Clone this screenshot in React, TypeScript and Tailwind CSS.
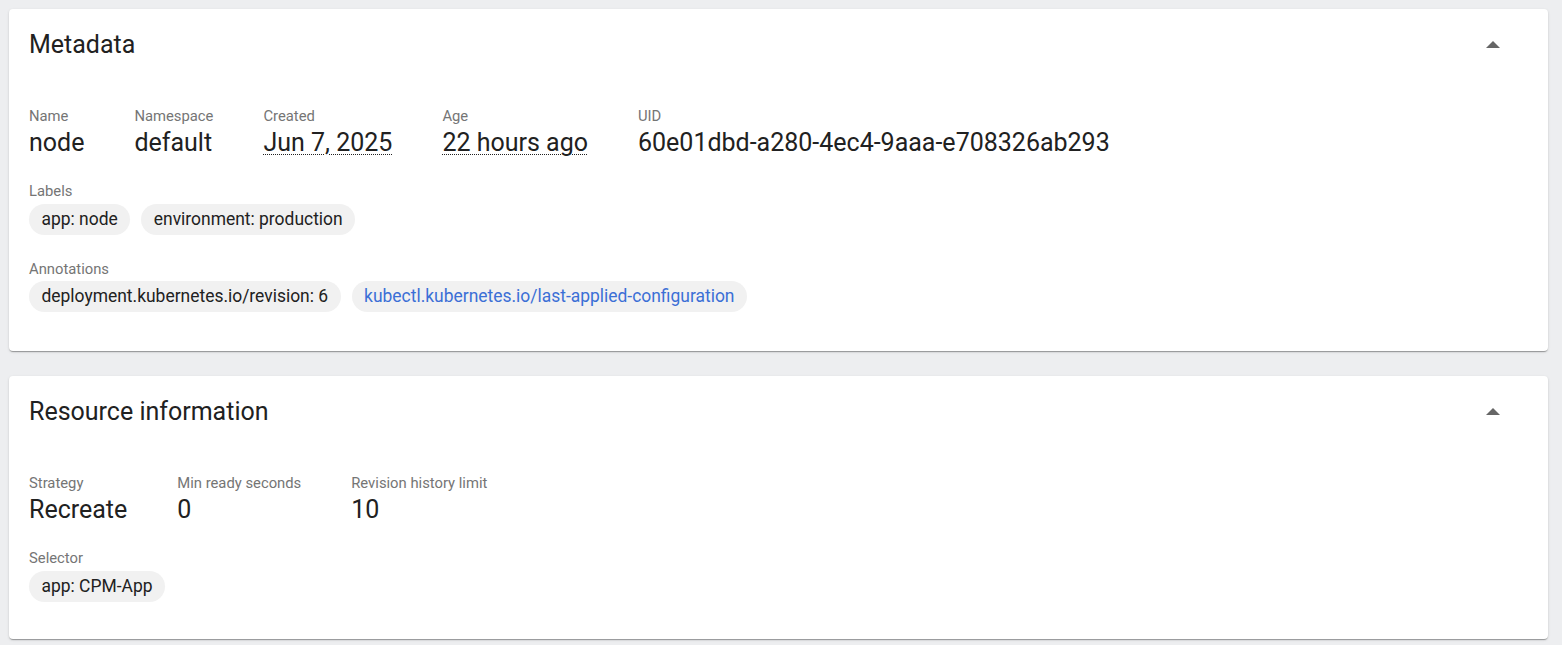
import React from 'react';

type Field = { label: string; value: string; dotted?: boolean };
type Chip = { text: string; link?: boolean };

const metaFields: Field[] = [
  { label: 'Name', value: 'node' },
  { label: 'Namespace', value: 'default' },
  { label: 'Created', value: 'Jun 7, 2025', dotted: true },
  { label: 'Age', value: '22 hours ago', dotted: true },
  { label: 'UID', value: '60e01dbd-a280-4ec4-9aaa-e708326ab293' },
];

const resourceFields: Field[] = [
  { label: 'Strategy', value: 'Recreate' },
  { label: 'Min ready seconds', value: '0' },
  { label: 'Revision history limit', value: '10' },
];

const ArrowUp = () => (
  <svg width="14" height="7" viewBox="0 0 14 7" className="block">
    <path d="M0 7 L7 0 L14 7 Z" fill="#666666" />
  </svg>
);

const FieldRow = ({ fields }: { fields: Field[] }) => (
  <div className="flex gap-x-[50px]">
    {fields.map((f) => (
      <div key={f.label} className="flex flex-col">
        <span className="text-[14.8px] leading-[20px] text-[#757575]">{f.label}</span>
        <span
          className={
            f.dotted
              ? 'pt-[1px] text-[25px] leading-[32px] text-[#212121] underline decoration-dotted decoration-1 underline-offset-[3px]'
              : 'pt-[1px] text-[25px] leading-[32px] text-[#212121]'
          }
        >
          {f.value}
        </span>
      </div>
    ))}
  </div>
);

const ChipGroup = ({ label, chips, className }: { label: string; chips: Chip[]; className: string }) => (
  <div className={className}>
    <div className="text-[14.8px] leading-[20px] text-[#757575]">{label}</div>
    <div className="mt-[2.5px] flex flex-wrap gap-[11px]">
      {chips.map((c) => (
        <span
          key={c.text}
          className={
            c.link
              ? 'flex h-[31px] items-center rounded-full bg-[#f1f1f1] px-[12.5px] text-[17.45px] text-[#3b6fd6]'
              : 'flex h-[31px] items-center rounded-full bg-[#f1f1f1] px-[12.5px] text-[17.45px] text-[#212121]'
          }
        >
          {c.text}
        </span>
      ))}
    </div>
  </div>
);

const Panel = ({ title, bodyClass, children }: { title: string; bodyClass: string; children: React.ReactNode }) => (
  <div className="rounded bg-white shadow-[0_2px_1px_-1px_rgba(0,0,0,0.2),0_1px_1px_0_rgba(0,0,0,0.14),0_1px_3px_0_rgba(0,0,0,0.12)]">
    <div className="flex h-[70px] items-center justify-between pl-[20px] pr-[48px]">
      <h2 className="pt-[2px] text-[25px] leading-[32px] text-[#212121]">{title}</h2>
      <ArrowUp />
    </div>
    <div className={bodyClass}>{children}</div>
  </div>
);

export default function App() {
  return (
    <div
      className="min-h-screen bg-[#edeef0] pt-[9px] pb-[6px] pl-[9px] pr-[14px]"
      style={{ fontFamily: 'Roboto, "Noto Sans", sans-serif' }}
    >
      <div className="flex flex-col gap-[25px]">
        <Panel title="Metadata" bodyClass="px-[20px] pt-[27px] pb-[39px]">
          <FieldRow fields={metaFields} />
          <ChipGroup
            className="mt-[22px]"
            label="Labels"
            chips={[{ text: 'app: node' }, { text: 'environment: production' }]}
          />
          <ChipGroup
            className="mt-[24px]"
            label="Annotations"
            chips={[
              { text: 'deployment.kubernetes.io/revision: 6' },
              { text: 'kubectl.kubernetes.io/last-applied-configuration', link: true },
            ]}
          />
        </Panel>
        <Panel title="Resource information" bodyClass="px-[20px] pt-[27px] pb-[37px]">
          <FieldRow fields={resourceFields} />
          <ChipGroup className="mt-[22px]" label="Selector" chips={[{ text: 'app: CPM-App' }]} />
        </Panel>
      </div>
    </div>
  );
}
